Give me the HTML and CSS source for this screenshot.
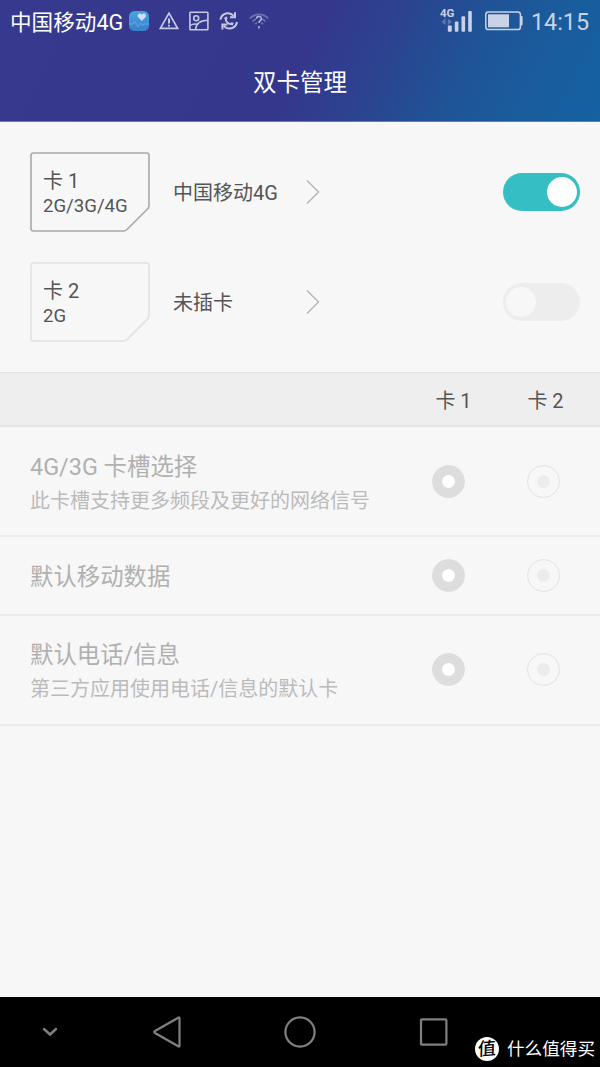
FILE: index.html
```html
<!DOCTYPE html>
<html lang="zh-CN">
<head>
  <meta charset="UTF-8" />
  <meta name="viewport" content="width=device-width, initial-scale=1.0" />
  <title>双卡管理</title>
  <link rel="stylesheet" href="styles.css">
</head>
<body>
  <header class="top">
    <div class="status-bar">
      <span class="carrier">中国移动4G</span>
      <div class="status-icons">
        <svg width="20" height="20" viewBox="0 0 20 20">
          <defs>
            <linearGradient id="health" x1="0" y1="0" x2="0" y2="1">
              <stop offset="0" stop-color="#45a5e0" />
              <stop offset="1" stop-color="#3b7fcb" />
            </linearGradient>
          </defs>
          <rect width="20" height="20" rx="5.5" fill="url(#health)" />
          <path d="M12.800 10 9.200 6.300C7.200 3.600 10.800.8 12.800 3.600c2-2.800 5.600 0 3.600 2.700z" fill="#cfe0f5" />
          <path d="M0 13h4l2-2.500 3 5.500 2.500-4 1.700 2.200 1.800-1.200h5" fill="none" stroke="#6db0e4" stroke-width=".8" />
        </svg>
        <svg width="20" height="20" viewBox="0 0 20 20" fill="none" stroke="#c6c7e4" stroke-width="1.7">
          <path d="M10 2.2 18.6 17.3H1.4z" />
          <path d="M10 7.5v5M10 13.8v1.8" stroke-width="2" />
        </svg>
        <svg width="20" height="20" viewBox="0 0 20 20" fill="none" stroke="#c6c7e4" stroke-width="1.6">
          <rect x=".9" y="1.200" width="18" height="17.600" rx=".8" />
          <circle cx="7.200" cy="7.200" r="2.500" />
          <path d="M6.600 18.500C7 12.800 11.500 9.400 18.600 9.200M1.300 14.400c2-1.400 4.200-1.800 6.700-1.200" />
        </svg>
        <svg width="20" height="20" viewBox="0 0 20 20" fill="none" stroke="#c6c7e4" stroke-width="2">
          <path d="M1.400 8.600C2.200 3.600 7.400 1 12 3L14.600 4.800M16 1.200v5h-5" />
          <path d="M18 11C17.200 16.200 12 18.800 7.400 16.800L4.800 15M3.400 18.600v-5h5" />
          <path d="M6.600 6.800C6.200 11 9.600 13.800 13.600 13" stroke-width="1.800" />
          <path d="M6.400 6.200 7.400 8.400M12 12.400l2.200.8" stroke-width="2.800" />
        </svg>
        <svg width="20" height="20" viewBox="0 0 20 20" fill="none" stroke="#6f70b0" stroke-width="1.800">
          <path d="M.8 7.400C6 2 14 2 19.200 7.400M3.600 10.400c1-1 2-1.700 3.400-2.200M13.200 8.200c1.200.5 2.200 1.200 3.200 2.200M6.200 13l1.800-1.400M12.200 11.600 14 13" />
          <path d="M7.600 7.600c.2-3 5-2.800 4.800 0-.1 1.800-2.300 1.900-2.400 4.400M10 15v2.400" stroke="#b3b4d8" stroke-width="1.600" />
        </svg>
      </div>
      <div class="status-right">
        <svg width="34" height="32" viewBox="0 0 34 32">
          <text x="0" y="12" class="net-type">4G</text>
          <path d="M5.500 13.300v7L1.500 16.800zM7.800 13.300v7l4-3.500z" fill="#6276b3" />
          <g fill="#c8d3e8">
            <rect x="7.800" y="20.500" width="4" height="6.300" rx="1" />
            <rect x="14.800" y="16.500" width="3.600" height="10.300" rx="1" />
            <rect x="21.500" y="11.200" width="3.600" height="15.600" rx="1" />
            <rect x="28.200" y="6" width="3.600" height="20.800" rx="1" />
          </g>
        </svg>
        <svg class="battery" width="38" height="20" viewBox="0 0 38 20">
          <rect x=".8" y="1" width="34.600" height="17.600" rx="2.600" fill="none" stroke="#c8d3e8" stroke-width="1.500" />
          <rect x="3" y="3.300" width="21" height="13" fill="#c8d3e8" />
          <path d="M35.400 5h1.200q1 0 1 1v7.600q0 1-1 1h-1.200z" fill="#c8d3e8" />
        </svg>
        <span class="clock">14:15</span>
      </div>
    </div>
    <h1>双卡管理</h1>
  </header>

  <main>
    <section class="sims">
      <div class="sim">
        <div class="sim-card">
          <svg class="sim-shape active" viewBox="0 0 120 80">
            <path d="M3.500 1H116.500Q119 1 119 3.500V53.500Q119 55.500 117.500 57L97 77.500Q95.500 79 93.500 79H3.500Q1 79 1 76.500V3.500Q1 1 3.500 1z" />
          </svg>
          <div class="sim-name">卡 1</div>
          <div class="sim-net">2G/3G/4G</div>
        </div>
        <span class="operator">中国移动4G</span>
        <svg class="arrow" width="14" height="26" viewBox="0 0 14 26"><path d="M1 1.500 12.500 13 1 24.500" /></svg>
        <div class="switch on"></div>
      </div>
      <div class="sim">
        <div class="sim-card">
          <svg class="sim-shape" viewBox="0 0 120 80">
            <path d="M3.500 1H116.500Q119 1 119 3.500V53.500Q119 55.500 117.500 57L97 77.500Q95.500 79 93.500 79H3.500Q1 79 1 76.500V3.500Q1 1 3.500 1z" />
          </svg>
          <div class="sim-name">卡 2</div>
          <div class="sim-net">2G</div>
        </div>
        <span class="operator">未插卡</span>
        <svg class="arrow" width="14" height="26" viewBox="0 0 14 26"><path d="M1 1.500 12.500 13 1 24.500" /></svg>
        <div class="switch"></div>
      </div>
    </section>

    <section class="settings">
      <div class="settings-head">
        <span></span>
        <span class="slot-one">卡 1</span>
        <span class="slot-two">卡 2</span>
      </div>
      <div class="setting">
        <div class="setting-text">
          <h2>4G/3G 卡槽选择</h2>
          <p>此卡槽支持更多频段及更好的网络信号</p>
        </div>
        <i class="radio checked"></i>
        <i class="radio"></i>
      </div>
      <div class="setting single">
        <div class="setting-text">
          <h2>默认移动数据</h2>
        </div>
        <i class="radio checked"></i>
        <i class="radio"></i>
      </div>
      <div class="setting">
        <div class="setting-text">
          <h2>默认电话/信息</h2>
          <p>第三方应用使用电话/信息的默认卡</p>
        </div>
        <i class="radio checked"></i>
        <i class="radio"></i>
      </div>
    </section>
  </main>

  <nav class="nav-bar">
    <svg width="16" height="10" viewBox="0 0 16 10"><path d="M2 2l6 5.500L14 2" stroke-width="2.400" /></svg>
    <svg width="30" height="34" viewBox="0 0 30 34"><path d="M27.500 3.300V30.700Q27.500 32 26.200 31.300L3 18Q1.500 17 3 16L26.200 2.700Q27.500 2 27.500 3.300z" /></svg>
    <svg width="34" height="34" viewBox="0 0 34 34"><circle cx="17" cy="17" r="14.600" /></svg>
    <svg width="30" height="30" viewBox="0 0 30 30"><rect x="2" y="2.300" width="25.400" height="25.400" rx="1" /></svg>
  </nav>

  <div class="watermark">
    <span class="logo"><b>值</b></span>
    <span>什么值得买</span>
  </div>
</body>
</html>
```
FILE: styles.css
```css
:root {
  --bg: #f7f7f7;
  --text: #555;
  --muted: #b0b0b0;
  --line: #ebebeb;
  --teal: #35bfc5;
  --status: #c8d3e8;
}

* {
  box-sizing: border-box;
}

body {
  position: relative;
  display: flex;
  flex-direction: column;
  width: 600px;
  height: 1067px;
  margin: 0;
  overflow: hidden;
  background: var(--bg);
  color: var(--text);
  font-family: Roboto, "Noto Sans CJK SC", sans-serif;
}

svg {
  display: block;
  flex: none;
}

h1, h2, p {
  margin: 0;
  font-weight: 400;
}

/* header */
.top {
  height: 122px;
  flex: none;
  border-bottom: 1px solid #6a78b6;
  background: linear-gradient(116deg, #37398f 0%, #35378d 50%, #2b4490 63%, #1f5497 76%, #195d9e 88%, #1561a2 100%);
  color: #fff;
}

.status-bar {
  display: flex;
  align-items: center;
  height: 41px;
  padding: 0 11px 0 10px;
}

.carrier {
  width: 119px;
  font-size: 21.6px;
  line-height: 41px;
  padding-top: 3px;
  white-space: nowrap;
}

.status-icons {
  display: flex;
  gap: 10px;
}

.status-right {
  display: flex;
  align-items: center;
  margin-left: auto;
  color: var(--status);
}

.net-type {
  fill: var(--status);
  font-size: 11.5px;
  font-weight: 700;
}

.battery {
  margin: 1px 8px 0 11px;
}

.clock {
  padding-top: 3px;
  font-size: 23.3px;
  line-height: 38px;
}

h1 {
  padding-top: 2px;
  font-size: 23.5px;
  line-height: 80px;
  text-align: center;
}

/* sim cards */
.sims {
  height: 250px;
  padding: 15px 20px 0 30px;
}

.sim {
  display: flex;
  align-items: center;
  height: 110px;
}

.sim-card {
  position: relative;
  width: 120px;
  height: 80px;
  padding: 16px 13px;
}

.sim-shape {
  position: absolute;
  top: 0;
  left: 0;
  width: 120px;
  height: 80px;
  fill: none;
  stroke: #e1e1e1;
  stroke-width: 1.6;
}

.sim-shape.active {
  stroke: #a9a9a9;
}

.sim-name {
  font-size: 20px;
  line-height: 26px;
}

.sim-net {
  font-size: 18.6px;
  line-height: 25px;
}

.operator {
  width: 133px;
  margin-left: 23px;
  padding-bottom: 2px;
  font-size: 20px;
}

.arrow {
  fill: none;
  stroke: #b5b5b5;
  stroke-width: 1.4;
}

.switch {
  display: flex;
  width: 77px;
  height: 38px;
  margin-left: auto;
  padding: 4px 3px;
  border-radius: 19px;
  background: #ededed;
}

.switch::before {
  content: "";
  width: 30px;
  height: 30px;
  border-radius: 50%;
  background: var(--bg);
}

.switch.on {
  justify-content: flex-end;
  background: var(--teal);
}

.switch.on::before {
  background: #fff;
}

/* settings table */
.settings-head,
.setting {
  display: grid;
  grid-template-columns: 1fr 95px 95px;
  align-items: center;
  justify-items: center;
  padding: 0 9px 0 30px;
  border-bottom: 2px solid var(--line);
}

.settings-head {
  height: 55px;
  border-top: 1px solid #e2e2e2;
  border-bottom-color: #e5e5e5;
  background: #eee;
  font-size: 20px;
}

.slot-one {
  padding-left: 10px;
}

.slot-two {
  padding-left: 4px;
}

.setting {
  height: 110px;
  color: var(--muted);
}

.setting.single {
  height: 78.5px;
}

.setting-text {
  justify-self: start;
  padding-top: 4px;
}

h2 {
  font-size: 23.4px;
  line-height: 36px;
}

.setting p {
  font-size: 20px;
  line-height: 33px;
  color: #bbb;
}

.radio {
  display: flex;
  align-items: center;
  justify-content: center;
  width: 33px;
  height: 33px;
  border: 1px solid #e2e2e2;
  border-radius: 50%;
}

.radio::before {
  content: "";
  width: 13px;
  height: 13px;
  border-radius: 50%;
  background: #ececec;
}

.radio.checked {
  border-color: #ddd;
  background: #ddd;
}

.radio.checked::before {
  background: #fff;
}

/* navigation keys */
.nav-bar {
  display: grid;
  grid-template-columns: 100px 133px 134px 133px;
  align-items: center;
  justify-items: center;
  height: 70px;
  margin-top: auto;
  background: #000;
}

.nav-bar svg {
  fill: none;
  stroke: #808080;
  stroke-width: 2.2;
  stroke-linecap: round;
}

.watermark {
  position: absolute;
  right: 5px;
  bottom: 5px;
  display: flex;
  align-items: center;
  gap: 8px;
  color: #fff;
  font-size: 17.6px;
  line-height: 26px;
}

.logo {
  width: 24px;
  height: 24px;
  border-radius: 50%;
  background: #fff;
  color: #000;
  font-size: 18px;
  line-height: 23px;
  text-align: center;
}

.logo b {
  display: block;
  font-weight: 500;
  transform: skewX(-6deg) rotate(-5deg);
}
```
